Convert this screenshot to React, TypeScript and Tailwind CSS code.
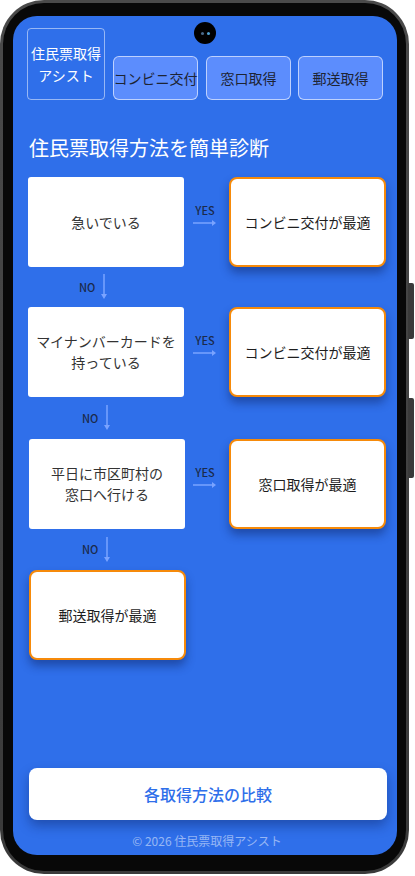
import React from 'react';

const font = { fontFamily: '"Noto Sans CJK JP", "Noto Sans", sans-serif' };

const Question: React.FC<{ lines: string[] }> = ({ lines }) => (
  <div className="h-[90px] w-[156px] bg-white rounded-[3px] flex flex-col items-center justify-center text-[14px] leading-[21px] text-[#333]">
    {lines.map((l) => (
      <span key={l}>{l}</span>
    ))}
  </div>
);

const Result: React.FC<{ text: string }> = ({ text }) => (
  <div className="h-[90px] w-[157px] bg-white rounded-[8px] border-2 border-[#f68a0a] shadow-[0_6px_10px_rgba(10,30,90,0.45)] flex items-center justify-center text-[14px] text-[#1e1e1e]">
    {text}
  </div>
);

const YesArrow: React.FC = () => (
  <div className="flex flex-col items-center justify-center w-[45px] pr-[3px] pb-[13px]">
    <span className="text-[11px] leading-[13px] font-medium text-[#1b2a4a]">YES</span>
    <svg width="24" height="8" viewBox="0 0 24 8" className="mt-[2px]">
      <line x1="0" y1="4" x2="20" y2="4" stroke="#7aa3ff" strokeWidth="1.5" />
      <path d="M19 1 L23 4 L19 7 Z" fill="#7aa3ff" />
    </svg>
  </div>
);

const NoArrow: React.FC<{ ml: string; h: string }> = ({ ml, h }) => (
  <div className={`flex items-center ${ml} ${h}`}>
    <span className="text-[11px] font-medium text-[#1b2a4a] mr-[5px]">NO</span>
    <svg width="8" height="26" viewBox="0 0 8 26">
      <line x1="4" y1="0" x2="4" y2="21" stroke="#7aa3ff" strokeWidth="1.5" />
      <path d="M1 20 L4 25 L7 20 Z" fill="#7aa3ff" />
    </svg>
  </div>
);

export default function App() {
  return (
    <div className="w-[415px] h-[876px] bg-white relative overflow-hidden" style={font}>
      {/* side buttons */}
      <div className="absolute left-[408px] top-[283px] w-[6px] h-[56px] bg-[#3a3a3a] rounded-r-[2px]" />
      <div className="absolute left-[408px] top-[398px] w-[6px] h-[80px] bg-[#3a3a3a] rounded-r-[2px]" />

      <div className="w-[409px] h-[874px] rounded-[44px] bg-gradient-to-b from-[#4a4a4a] to-[#3a3a3a] p-[3px]">
        <div className="w-full h-full rounded-[41px] bg-[#080808] pt-[13px] pl-[10px] pr-[9px] pb-[16px]">
          <div className="relative w-full h-full rounded-[24px] bg-[#2f6fea] overflow-hidden flex flex-col pl-[15px] pr-[11px] pt-[12px]">
            {/* camera */}
            <div className="absolute left-[181px] top-[6px] w-[22px] h-[22px] rounded-full bg-black flex items-center justify-center gap-[3px]">
              <span className="w-[3px] h-[3px] rounded-full bg-[#4a6a8a]" />
              <span className="w-[3px] h-[3px] rounded-full bg-[#4fa0d0]" />
            </div>

            {/* header */}
            <div className="flex items-end">
              <div className="w-[78px] h-[72px] rounded-[4px] border border-white/50 flex flex-col items-center justify-center text-white text-[14px] leading-[22px] -ml-[1px]">
                <span>住民票取得</span>
                <span>アシスト</span>
              </div>
              <div className="ml-[8px] w-[85px] h-[44px] rounded-[6px] border border-white/60 bg-[#5c8dfd] flex items-center justify-center text-[14px] text-[#1d2433] whitespace-nowrap">
                コンビニ交付
              </div>
              <div className="ml-[8px] w-[85px] h-[44px] rounded-[6px] border border-white/60 bg-[#5c8dfd] flex items-center justify-center text-[14px] text-[#1d2433]">
                窓口取得
              </div>
              <div className="ml-[7px] w-[85px] h-[44px] rounded-[6px] border border-white/60 bg-[#5c8dfd] flex items-center justify-center text-[14px] text-[#1d2433]">
                郵送取得
              </div>
            </div>

            <h1 className="mt-[35px] text-white text-[20px] leading-[26px] ml-[1px]">
              住民票取得方法を簡単診断
            </h1>

            {/* flow */}
            <div className="mt-[16px] flex flex-col">
              <div className="flex items-center">
                <Question lines={['急いでいる']} />
                <YesArrow />
                <Result text="コンビニ交付が最適" />
              </div>
              <NoArrow ml="ml-[51px]" h="h-[40px]" />
              <div className="flex items-center">
                <Question lines={['マイナンバーカードを', '持っている']} />
                <YesArrow />
                <Result text="コンビニ交付が最適" />
              </div>
              <NoArrow ml="ml-[54px]" h="h-[42px]" />
              <div className="flex items-center pl-[1px]">
                <Question lines={['平日に市区町村の', '窓口へ行ける']} />
                <div className="-ml-[1px]">
                  <YesArrow />
                </div>
                <Result text="窓口取得が最適" />
              </div>
              <NoArrow ml="ml-[54px]" h="h-[41px]" />
              <div className="flex pl-[1px]">
                <Result text="郵送取得が最適" />
              </div>
            </div>

            <div className="mt-auto">
              <button className="w-[358px] h-[52px] ml-[1px] rounded-[8px] bg-white shadow-[0_6px_12px_rgba(10,30,90,0.4)] text-[#2f6fea] text-[16px] font-medium">
                各取得方法の比較
              </button>
              <p className="text-center text-[12px] leading-[16px] text-white/50 mt-[13px] mb-[6px]">
                © 2026 住民票取得アシスト
              </p>
            </div>
          </div>
        </div>
      </div>
    </div>
  );
}
